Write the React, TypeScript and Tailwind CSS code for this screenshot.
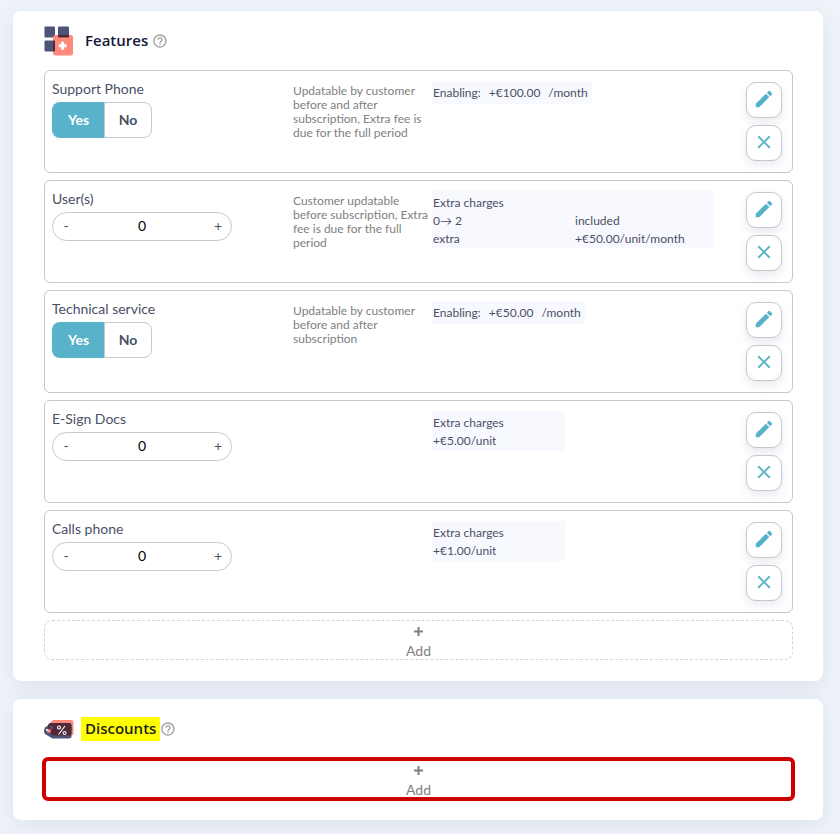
import { useState } from "react";
import { MdClose, MdEdit, MdHelpOutline } from "react-icons/md";

interface Charge {
  label: string;
  value?: string;
}

interface Feature {
  name: string;
  kind: "toggle" | "counter";
  rule?: string;
  enabling?: string;
  charges?: Charge[];
}

const features: Feature[] = [
  {
    name: "Support Phone",
    kind: "toggle",
    rule: "Updatable by customer before and after subscription, Extra fee is due for the full period",
    enabling: "+€100.00",
  },
  {
    name: "User(s)",
    kind: "counter",
    rule: "Customer updatable before subscription, Extra fee is due for the full period",
    charges: [
      { label: "0→ 2", value: "included" },
      { label: "extra", value: "+€50.00/unit/month" },
    ],
  },
  {
    name: "Technical service",
    kind: "toggle",
    rule: "Updatable by customer before and after subscription",
    enabling: "+€50.00",
  },
  { name: "E-Sign Docs", kind: "counter", charges: [{ label: "+€5.00/unit" }] },
  { name: "Calls phone", kind: "counter", charges: [{ label: "+€1.00/unit" }] },
];

const FeaturesIcon = () => (
  <svg viewBox="0 0 30 30" className="size-[30px]" aria-hidden="true">
    <rect x="0.5" y="0.5" width="10.5" height="11" rx="1" fill="#4d5478" />
    <rect x="14" y="0.5" width="11" height="11" rx="1" fill="#4d5478" />
    <rect x="0.5" y="14.5" width="10.5" height="11" rx="1" fill="#4d5478" />
    <rect x="9" y="9" width="20" height="20.5" rx="2.5" fill="#ff8a7c" />
    <path
      d="M14 9h11v1.500a1 1 0 0 1-1 1H15a1 1 0 0 1-1-1zM9 14.500h1a1 1 0 0 1 1 1v9a1 1 0 0 1-1 1H9z"
      fill="#4f2b3a"
    />
    <path d="M18.600 15.800v8M14.600 19.800h8" stroke="#fff" strokeWidth="3" />
  </svg>
);

const DiscountsIcon = () => (
  <svg viewBox="0 0 30 20" className="h-5 w-[30px]" aria-hidden="true">
    <path
      d="M9 1h18a2.500 2.500 0 0 1 2.500 2.500v10.500a2.500 2.500 0 0 1-2.500 2.500H9L4 12V6z"
      fill="#ff8a7c"
    />
    <path
      d="M7 4h18A2.500 2.500 0 0 1 27.500 6.500v10.500a2.500 2.500 0 0 1-2.500 2.500H8.500L1 15Q-1 12 1 8.500z"
      fill="#4d5478"
    />
    <path
      d="M6 4h19A2.500 2.500 0 0 1 27.500 6.500V14a2.500 2.500 0 0 1-2.500 2.500H8.500L4 12.500V6z"
      fill="#4f2b3a"
    />
    <circle cx="7.500" cy="8.500" r="1.800" fill="#4d5478" />
    <circle cx="5" cy="12" r="2" fill="#ff8a7c" />
    <circle cx="3" cy="11" r="1" fill="#fff" />
    <g fill="none" stroke="#fff" strokeWidth="1.100">
      <circle cx="15" cy="8.500" r="1.500" />
      <circle cx="20.500" cy="14" r="1.500" />
      <path d="M21 7l-6.500 8.500" />
    </g>
  </svg>
);

const HelpButton = ({ label }: { label: string }) => (
  <button type="button" aria-label={label} className="text-[#a0a0a0]">
    <MdHelpOutline className="size-4" />
  </button>
);

const Toggle = ({ name }: { name: string }) => {
  const [isOn, setIsOn] = useState(true);
  const active = "border-[#58b2c9] bg-[#58b2c9] text-white";
  const idle = "border-[#c8c8c8] bg-white";

  return (
    <div role="group" aria-label={name} className="flex h-9 w-[100px] text-sm font-bold">
      <button
        type="button"
        aria-pressed={isOn}
        onClick={() => setIsOn(true)}
        className={`w-[52px] rounded-l-lg border border-r-0 ${isOn ? active : idle}`}
      >
        Yes
      </button>
      <button
        type="button"
        aria-pressed={!isOn}
        onClick={() => setIsOn(false)}
        className={`flex-1 rounded-r-lg border ${isOn ? idle : active}`}
      >
        No
      </button>
    </div>
  );
};

const Counter = ({ name }: { name: string }) => {
  const [count, setCount] = useState(0);

  return (
    <div className="flex h-[29px] w-[180px] items-center rounded-full border border-[#c8c8c8] pb-px text-sm">
      <button
        type="button"
        aria-label={`Decrease ${name}`}
        onClick={() => setCount((prev) => Math.max(0, prev - 1))}
        className="w-[26px]"
      >
        -
      </button>
      <input
        aria-label={name}
        value={count}
        onChange={(e) => setCount(Number(e.target.value) || 0)}
        className="min-w-0 flex-1 bg-transparent text-center text-black outline-none"
      />
      <button
        type="button"
        aria-label={`Increase ${name}`}
        onClick={() => setCount((prev) => prev + 1)}
        className="w-[26px]"
      >
        +
      </button>
    </div>
  );
};

const actionClass =
  "flex size-9 items-center justify-center rounded-[10px] border border-[#c8c8c8] bg-white pb-[2px] text-[#58b2c9] shadow-[0_4px_8px_rgba(90,100,150,0.14)]";

const FeatureRow = ({ feature }: { feature: Feature }) => {
  const { name, kind, rule, enabling, charges } = feature;
  const hasValues = charges?.some((charge) => charge.value);

  return (
    <li className="flex h-[103px] rounded-md border border-[#c8c8c8] pt-[9px] pr-[10px] pl-[7px]">
      <div className="w-[241px] shrink-0">
        <p className="mb-1 text-sm leading-[18px]">{name}</p>
        {kind === "toggle" ? <Toggle name={name} /> : <Counter name={name} />}
      </div>

      <p className="w-[139px] shrink-0 pt-1 pr-1 text-xs leading-[14px] text-[#808080]">
        {rule}
      </p>

      <div className="min-w-0 flex-1 pt-px text-xs leading-[18px]">
        {enabling && (
          <p className="flex w-fit gap-2 bg-[#f8f9fe] pt-px pr-1 pl-px leading-[22px]">
            <span>Enabling:</span>
            <span>{enabling}</span>
            <span>/month</span>
          </p>
        )}

        {charges && (
          <table
            className={`bg-[#f8f9fe] text-left ${hasValues ? "w-[282px]" : "w-[133px]"}`}
          >
            <caption className="bg-[#f8f9fe] px-px pt-[3px] text-left">
              Extra charges
            </caption>
            <tbody>
              {charges.map(({ label, value }) => (
                <tr key={label}>
                  <td className="w-1/2 px-px last:pb-px">{label}</td>
                  {value && <td className="px-[2px]">{value}</td>}
                </tr>
              ))}
            </tbody>
          </table>
        )}
      </div>

      <div className="flex flex-col gap-[7px] pt-[2px]">
        <button type="button" aria-label={`Edit ${name}`} className={actionClass}>
          <MdEdit className="size-[22px]" />
        </button>
        <button type="button" aria-label={`Remove ${name}`} className={actionClass}>
          <MdClose className="size-[22px]" />
        </button>
      </div>
    </li>
  );
};

const AddButton = ({ highlighted }: { highlighted?: boolean }) => (
  <button
    type="button"
    className={`flex h-10 flex-col items-center gap-[7px] border pt-[6px] text-sm text-[#808080] ${
      highlighted
        ? "rounded-sm border-[#808080] outline-4 -outline-offset-2 outline-[#d00000]"
        : "rounded-lg border-dashed border-[#d4d4d4]"
    }`}
  >
    <svg viewBox="0 0 9 9" className="size-[9px] shrink-0" aria-hidden="true">
      <path d="M4.500 0v9M0 4.500h9" stroke="currentColor" strokeWidth="2" />
    </svg>
    <span className="leading-4">Add</span>
  </button>
);

const cardClass =
  "flex flex-col rounded-lg bg-white pr-[30px] pb-[21px] pl-[31px] shadow-[0_6px_24px_rgba(130,150,190,0.18)]";

const headingClass =
  "pb-[2px] font-['Open_Sans',sans-serif] text-[15px] leading-[22px] font-semibold";

const App = () => {
  return (
    <main className="flex min-h-screen flex-col gap-[18px] bg-[#f0f3f9] pt-[11px] pr-[17px] pb-[14px] pl-[13px] font-['Lato',sans-serif] text-[#4a4f66]">
      <section className={cardClass}>
        <header className="flex h-[59px] items-center gap-[11px]">
          <FeaturesIcon />
          <div className="flex items-center gap-1">
            <h2 className={`${headingClass} text-[#14193a]`}>Features</h2>
            <HelpButton label="Help about features" />
          </div>
        </header>

        <ul className="flex flex-col gap-[7px] pb-[7px]">
          {features.map((feature) => (
            <FeatureRow key={feature.name} feature={feature} />
          ))}
        </ul>

        <AddButton />
      </section>

      <section className={cardClass}>
        <header className="flex h-[60px] items-center gap-[7px]">
          <DiscountsIcon />
          <div className="flex items-center">
            <h2 className={`${headingClass} bg-[#ffff00] px-1 text-[#1d2119]`}>
              Discounts
            </h2>
            <HelpButton label="Help about discounts" />
          </div>
        </header>

        <AddButton highlighted />
      </section>
    </main>
  );
};

export default App;
